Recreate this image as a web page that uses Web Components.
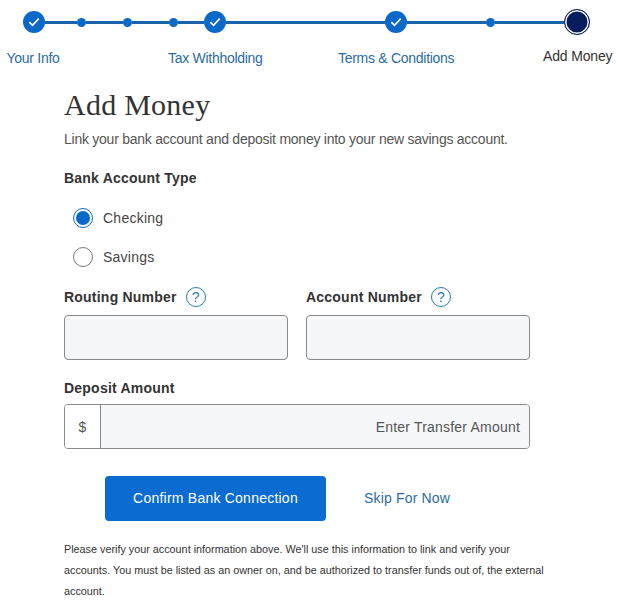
<!DOCTYPE html>
<html lang="en"><head><meta charset="utf-8"><title>Add Money</title>
<style>
html,body{margin:0;padding:0;background:#fff}
body{font-family:"Liberation Sans",Arial,sans-serif;color:#333;width:619px;height:607px;overflow:hidden}
</style></head><body>
<app-stepper></app-stepper>
<add-money-form>
  <h-title slot="title">Add Money</h-title>
  <span slot="lead">Link your bank account and deposit money into your new savings account.</span>
  <span slot="type-label">Bank Account Type</span>
  <radio-row slot="radios" checked>Checking</radio-row>
  <radio-row slot="radios">Savings</radio-row>
  <text-field slot="routing" label="Routing Number" help></text-field>
  <text-field slot="account" label="Account Number" help></text-field>
  <amount-field slot="amount" label="Deposit Amount" placeholder="Enter Transfer Amount"></amount-field>
  <span slot="primary">Confirm Bank Connection</span>
  <span slot="secondary">Skip For Now</span>
  <span slot="note">Please verify your account information above. We'll use this information to link and verify your accounts. You must be listed as an owner on, and be authorized to transfer funds out of, the external account.</span>
</add-money-form>
<script>
function def(name,html){
  customElements.define(name,class extends HTMLElement{
    constructor(){super();this.attachShadow({mode:'open'});}
    connectedCallback(){
      this.shadowRoot.innerHTML=typeof html==='function'?html(this):html;
    }
  });
}
const check='<svg width="12" height="10" viewBox="0 0 12 10"><path d="M1.3 5.2 4.5 8.3 10.7 1.6" fill="none" stroke="#fff" stroke-width="1.7"/></svg>';
const seg=w=>`<i class="seg" style="width:${w}px"></i>`;
const done=`<b class="done">${check}</b>`, dot='<b class="dot"></b>';
def('app-stepper',`<style>
:host{display:block;height:87px;box-sizing:border-box;padding-top:9px}
.track{display:flex;align-items:center;height:26px;padding-left:23px}
.seg{display:block;height:3px;background:#1a63ab}
.done{display:flex;align-items:center;justify-content:center;width:22px;height:22px;border-radius:50%;background:#0a68c9;flex:none}
.dot{display:block;width:9px;height:9px;border-radius:50%;background:#0a68c9;flex:none}
.now{display:block;width:26px;height:26px;box-sizing:border-box;border-radius:50%;background:#071d5e;border:1px solid #071d5e;box-shadow:inset 0 0 0 1.5px #fff;flex:none}
.labels{display:grid;grid-template-columns:161.5px 170px 205px auto;padding-left:6.5px;margin-top:14px;font-size:14px;line-height:18px;color:#2b6ca5;letter-spacing:-.28px;white-space:nowrap}
.cur{color:#333;margin-top:-2px;letter-spacing:-.15px}
</style>
<div class="track">${done}${seg(32)}${dot}${seg(37)}${dot}${seg(37)}${dot}${seg(26)}${done}${seg(159)}${done}${seg(79)}${dot}${seg(69)}<b class="now"></b></div>
<div class="labels"><span>Your Info</span><span>Tax Withholding</span><span>Terms &amp; Conditions</span><span class="cur">Add Money</span></div>`);
def('h-title',`<style>:host{display:block;font:30px/36px "Liberation Serif",serif;color:#333;letter-spacing:.25px}</style><slot></slot>`);
def('radio-row',h=>`<style>
:host{display:flex;align-items:center;height:39px;padding-left:9px;font-size:14px;color:#444;letter-spacing:.25px}
.r{width:20px;height:20px;box-sizing:border-box;border-radius:50%;border:1px solid #777;margin-right:10px;background:#fff;display:flex;align-items:center;justify-content:center}
.on{border-color:#0a68c9}
.on::after{content:"";width:14px;height:14px;border-radius:50%;background:#0a68c9}
</style><span class="r ${h.hasAttribute('checked')?'on':''}"></span><slot></slot>`);
const labelCss=`.l{display:flex;align-items:center;height:24px;font-size:14px;font-weight:700;color:#333;letter-spacing:.22px;white-space:nowrap}
.q{display:flex;align-items:center;justify-content:center;width:20px;height:20px;box-sizing:border-box;border:1.5px solid #2b7bb5;border-radius:50%;margin-left:9px;font-size:14px;font-weight:400;color:#2b7bb5;letter-spacing:0}`;
def('text-field',h=>`<style>:host{display:block;width:224px}${labelCss}
.i{height:45px;box-sizing:border-box;margin-top:6px;background:#f5f7f9;border:1px solid #8a8a8a;border-radius:4px}</style>
<div class="l">${h.getAttribute('label')}${h.hasAttribute('help')?'<span class="q">?</span>':''}</div><div class="i"></div>`);
def('amount-field',h=>`<style>:host{display:block;width:466px}${labelCss}
.i{display:flex;height:45px;box-sizing:border-box;margin-top:4px;border:1px solid #8a8a8a;border-radius:4px;overflow:hidden;font-size:14px;color:#555}
.p{width:35px;display:flex;align-items:center;justify-content:center;border-right:1px solid #8a8a8a;background:#fff}
.v{flex:1;display:flex;align-items:center;justify-content:flex-end;padding-right:9px;background:#f5f7f9;letter-spacing:.2px}</style>
<div class="l">${h.getAttribute('label')}</div><div class="i"><span class="p">$</span><span class="v">${h.getAttribute('placeholder')}</span></div>`);
def('add-money-form',`<style>
:host{display:block;padding-left:64px;width:555px;box-sizing:border-box}
.lead{margin-top:7px;font-size:14px;line-height:18px;color:#555;letter-spacing:-.25px;white-space:nowrap}
.type{margin-top:21px;font-size:14px;line-height:18px;font-weight:700;color:#333;letter-spacing:.22px}
.radios{margin-top:11px}
.pair{display:flex;gap:18px;margin-top:9px}
.amt{margin-top:16px}
.act{display:flex;align-items:center;margin-top:27px;padding-left:41px}
.btn{display:flex;align-items:center;justify-content:center;width:221px;height:45px;box-sizing:border-box;padding-bottom:2px;background:#0a6bd0;border-radius:4px;color:#fff;font-size:14px;letter-spacing:.23px}
.sec{margin-left:38px;padding-bottom:2px;font-size:14px;color:#2b6ca5;letter-spacing:.17px}
.note{margin-top:18px;font-size:10.8px;line-height:21px;color:#333;width:484px}
</style>
<slot name="title"></slot>
<div class="lead"><slot name="lead"></slot></div>
<div class="type"><slot name="type-label"></slot></div>
<div class="radios"><slot name="radios"></slot></div>
<div class="pair"><slot name="routing"></slot><slot name="account"></slot></div>
<div class="amt"><slot name="amount"></slot></div>
<div class="act"><div class="btn"><slot name="primary"></slot></div><div class="sec"><slot name="secondary"></slot></div></div>
<div class="note"><slot name="note"></slot></div>`);
</script>
</body></html>
